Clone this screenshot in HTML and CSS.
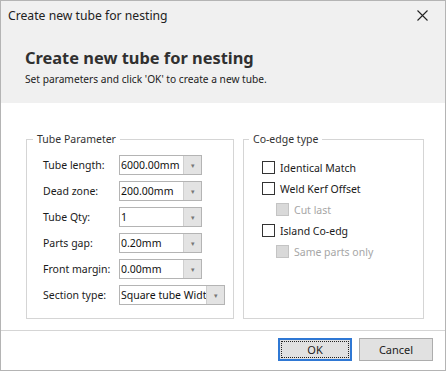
FILE: index.html
```html
<!DOCTYPE html>
<html lang="en">
<head>
    <meta charset="UTF-8">
    <title>Create new tube for nesting</title>
    <link rel="stylesheet" href="styles.css">
</head>
<body>
    <div class="window">
        <div class="titlebar">
            <span class="title">Create new tube for nesting</span>
            <span class="close">
                <svg width="11" height="11" viewBox="0 0 11 11"><path d="M0.5 0.5 L10.5 10.5 M10.5 0.5 L0.5 10.5" stroke="#222" stroke-width="1.1" fill="none"/></svg>
            </span>
        </div>
        <div class="header">
            <h1>Create new tube for nesting</h1>
            <p>Set parameters and click 'OK' to create a new tube.</p>
        </div>
        <div class="content">
            <fieldset class="group group-params">
                <legend>Tube Parameter</legend>
                <div class="group-body">
                    <div class="row">
                        <label>Tube length:</label>
                        <div class="combo"><span class="value">6000.00mm</span><span class="drop">&#9662;</span></div>
                    </div>
                    <div class="row">
                        <label>Dead zone:</label>
                        <div class="combo"><span class="value">200.00mm</span><span class="drop">&#9662;</span></div>
                    </div>
                    <div class="row">
                        <label>Tube Qty:</label>
                        <div class="combo"><span class="value">1</span><span class="drop">&#9662;</span></div>
                    </div>
                    <div class="row">
                        <label>Parts gap:</label>
                        <div class="combo"><span class="value">0.20mm</span><span class="drop">&#9662;</span></div>
                    </div>
                    <div class="row">
                        <label>Front margin:</label>
                        <div class="combo"><span class="value">0.00mm</span><span class="drop">&#9662;</span></div>
                    </div>
                    <div class="row">
                        <label>Section type:</label>
                        <div class="combo combo-wide"><span class="value">Square tube Widt</span><span class="drop">&#9662;</span></div>
                    </div>
                </div>
            </fieldset>
            <fieldset class="group group-coedge">
                <legend>Co-edge type</legend>
                <div class="group-body">
                    <div class="check"><span class="box"></span>Identical Match</div>
                    <div class="check"><span class="box"></span>Weld Kerf Offset</div>
                    <div class="check sub disabled"><span class="box"></span>Cut last</div>
                    <div class="check"><span class="box"></span>Island Co-edg</div>
                    <div class="check sub disabled"><span class="box"></span>Same parts only</div>
                </div>
            </fieldset>
        </div>
        <div class="footer">
            <button class="btn btn-ok"><span>OK</span></button>
            <button class="btn">Cancel</button>
        </div>
    </div>
</body>
</html>
```
FILE: styles.css
```css
body {
    margin: 0;
    font-family: "Noto Sans", "Open Sans", sans-serif;
    font-size: 10.5px;
    color: #1e1e1e;
    background: #ffffff;
}
.window {
    width: 446px;
    height: 371px;
    box-sizing: border-box;
    border: 1px solid #b4b4b4;
    background: #ffffff;
    display: flex;
    flex-direction: column;
}
.titlebar {
    height: 29px;
    flex: none;
    background: #f0f0f0;
    display: flex;
    align-items: center;
    justify-content: space-between;
    padding: 0 17px 0 7px;
}
.title {
    font-size: 12.2px;
    color: #222;
    margin-top: -1px;
}
.close {
    display: flex;
}
.header {
    height: 73px;
    flex: none;
    box-sizing: border-box;
    background: #f0f0f0;
    padding: 16px 24px 0;
}
.header h1 {
    margin: 0;
    font-size: 16.4px;
    font-weight: bold;
    color: #303030;
    line-height: 23px;
}
.header p {
    margin: 3px 0 0;
    font-size: 10.2px;
    color: #222;
}
.content {
    flex: 1;
    display: flex;
    gap: 9px;
    padding: 29px 0 0 25px;
}
.group {
    margin: 0;
    border: 1px solid #d5d5d5;
    padding: 0;
    height: 187px;
    box-sizing: border-box;
}
.group legend {
    margin-left: 6px;
    padding: 0 4px;
    color: #333;
    font-size: 10.5px;
}
.group-params {
    width: 208px;
}
.group-params .group-body {
    padding: 9px 0 0 16px;
}
.group-coedge {
    width: 181px;
}
.group-coedge legend {
    margin-left: 5px;
}
.group-coedge .group-body {
    padding: 11px 0 0 18px;
}
.row {
    display: flex;
    align-items: center;
    height: 20px;
    margin-bottom: 6px;
}
.row label {
    width: 76px;
    flex: none;
    color: #1a1a1a;
}
.combo {
    display: flex;
    width: 83px;
    height: 20px;
    box-sizing: border-box;
    border: 1px solid #b4b4b4;
    background: #fff;
}
.combo-wide {
    width: 106px;
}
.combo .value {
    flex: 1;
    overflow: hidden;
    white-space: nowrap;
    padding-left: 1px;
    line-height: 18px;
    font-size: 10.5px;
    color: #111;
}
.combo .drop {
    width: 17px;
    flex: none;
    background: #e3e3e3;
    border-left: 1px solid #cfcfcf;
    color: #777;
    font-size: 7px;
    display: flex;
    align-items: center;
    justify-content: center;
}
.check {
    display: flex;
    align-items: center;
    height: 21px;
    color: #1a1a1a;
}
.check .box {
    width: 11px;
    height: 11px;
    border: 1px solid #333;
    background: #fff;
    margin-right: 5px;
}
.check.sub {
    padding-left: 14px;
}
.check.disabled {
    color: #a6a6a6;
}
.check.disabled .box {
    border-color: #c4c4c4;
    background: #d9d9d9;
}
.footer {
    height: 40px;
    flex: none;
    box-sizing: border-box;
    border-top: 1px solid #d5d5d5;
    display: flex;
    justify-content: flex-end;
    align-items: flex-start;
    gap: 7px;
    padding: 7px 12px 0 0;
}
.btn {
    width: 74px;
    height: 23px;
    margin: 0;
    border: 1px solid #adadad;
    background: #e1e1e1;
    font-family: inherit;
    font-size: 11px;
    color: #222;
    padding: 0;
}
.btn-ok {
    border: 2px solid #2f78d4;
    padding: 1px;
}
.btn-ok span {
    display: block;
    height: 100%;
    box-sizing: border-box;
    border: 1px dotted #222;
    line-height: 15px;
}
```
